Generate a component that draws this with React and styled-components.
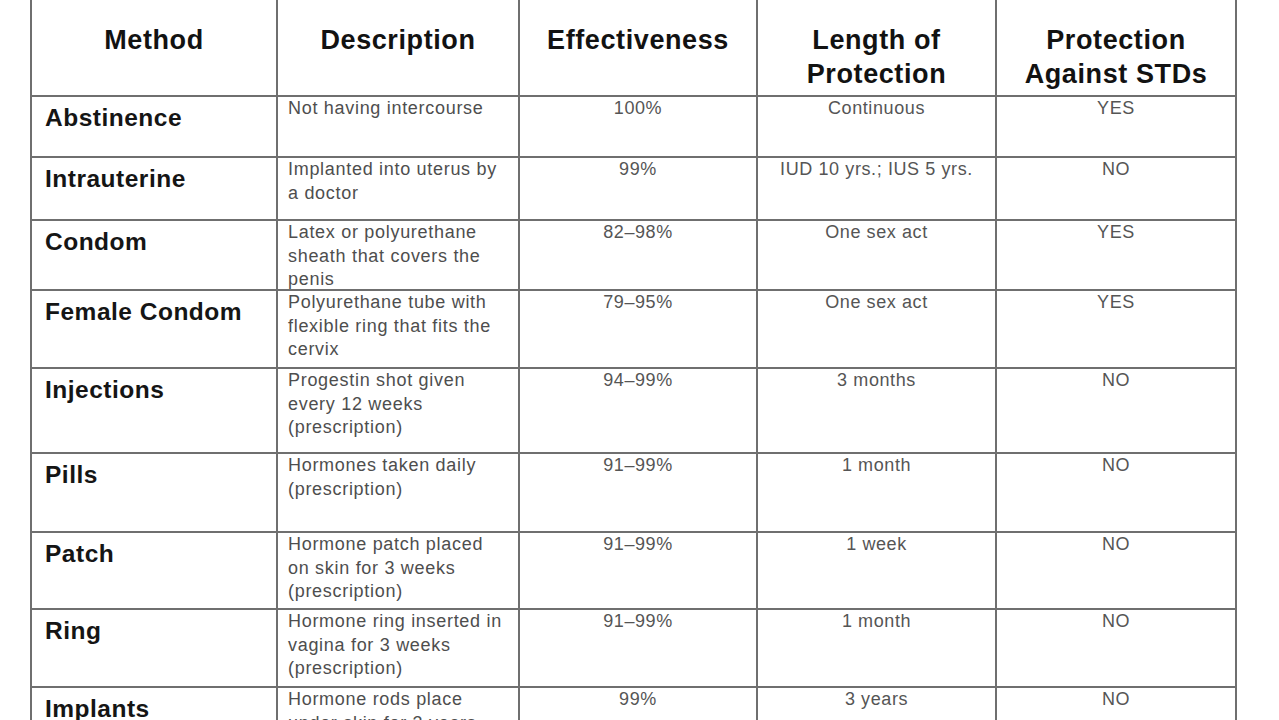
import React from 'react'
import styled, { createGlobalStyle } from 'styled-components'

const GlobalStyle = createGlobalStyle`
  html, body {
    margin: 0;
    padding: 0;
    background: #fff;
    overflow: hidden;
  }
  body {
    font-family: 'Liberation Sans', Arial, sans-serif;
  }
`

const Page = styled.div`
  width: 1279px;
  height: 720px;
  padding-left: 30px;
  box-sizing: border-box;
  overflow: hidden;
`

const Table = styled.table`
  margin-top: -10px;
  border-collapse: collapse;
  table-layout: fixed;
  width: 1207px;
`

const Col = styled.col`
  width: ${p => p.$w}px;
`

const Row = styled.tr`
  height: ${p => p.$h}px;
`

const HeadCell = styled.th`
  border: 2px solid #6f6f6f;
  vertical-align: top;
  padding: 31px 0 0;
  font-size: 27px;
  line-height: 34px;
  letter-spacing: 0.6px;
  font-weight: 700;
  color: #121212;
  text-align: center;
  white-space: nowrap;
`

const MethodCell = styled.td`
  border: 2px solid #6f6f6f;
  vertical-align: top;
  padding: 8px 4px 0 13px;
  font-size: 24.5px;
  line-height: 26px;
  letter-spacing: 0.5px;
  font-weight: 700;
  color: #151515;
  white-space: nowrap;
`

const DescCell = styled.td`
  border: 2px solid #6f6f6f;
  vertical-align: top;
  padding: 0 4px 0 10px;
  font-size: 18px;
  line-height: 23.5px;
  letter-spacing: 0.7px;
  color: #4e4e4e;
`

const Line = styled.span`
  display: block;
  height: 23.5px;
  white-space: nowrap;

  &:last-child {
    height: 12px;
  }
`

const ValueCell = styled.td`
  border: 2px solid #6f6f6f;
  vertical-align: top;
  padding: 0 4px;
  font-size: 18px;
  line-height: 23.5px;
  letter-spacing: 0.6px;
  color: #555;
  text-align: center;
  white-space: nowrap;
`

const columns = [246, 242, 238, 239, 240]

const rows = [
  { h: 61, method: 'Abstinence', desc: ['Not having intercourse'], eff: '100%', len: 'Continuous', std: 'YES' },
  { h: 63, method: 'Intrauterine', desc: ['Implanted into uterus by', 'a doctor'], eff: '99%', len: 'IUD 10 yrs.; IUS 5 yrs.', std: 'NO' },
  { h: 70, method: 'Condom', desc: ['Latex or polyurethane', 'sheath that covers the', 'penis'], eff: '82–98%', len: 'One sex act', std: 'YES' },
  { h: 78, method: 'Female Condom', desc: ['Polyurethane tube with', 'flexible ring that fits the', 'cervix'], eff: '79–95%', len: 'One sex act', std: 'YES' },
  { h: 85, method: 'Injections', desc: ['Progestin shot given', 'every 12 weeks', '(prescription)'], eff: '94–99%', len: '3 months', std: 'NO' },
  { h: 79, method: 'Pills', desc: ['Hormones taken daily', '(prescription)'], eff: '91–99%', len: '1 month', std: 'NO' },
  { h: 77, method: 'Patch', desc: ['Hormone patch placed', 'on skin for 3 weeks', '(prescription)'], eff: '91–99%', len: '1 week', std: 'NO' },
  { h: 78, method: 'Ring', desc: ['Hormone ring inserted in', 'vagina for 3 weeks', '(prescription)'], eff: '91–99%', len: '1 month', std: 'NO' },
  { h: 80, method: 'Implants', desc: ['Hormone rods place', 'under skin for 3 years', '(prescription)'], eff: '99%', len: '3 years', std: 'NO' }
]

export default function App() {
  return (
    <Page>
      <GlobalStyle />
      <Table>
        <colgroup>
          {columns.map((w, i) => (
            <Col key={i} $w={w} />
          ))}
        </colgroup>
        <thead>
          <Row $h={105}>
            <HeadCell>Method</HeadCell>
            <HeadCell>Description</HeadCell>
            <HeadCell>Effectiveness</HeadCell>
            <HeadCell>
              Length of
              <br />
              Protection
            </HeadCell>
            <HeadCell>
              Protection
              <br />
              Against STDs
            </HeadCell>
          </Row>
        </thead>
        <tbody>
          {rows.map(r => (
            <Row key={r.method} $h={r.h}>
              <MethodCell>{r.method}</MethodCell>
              <DescCell>
                {r.desc.map(l => (
                  <Line key={l}>{l}</Line>
                ))}
              </DescCell>
              <ValueCell>{r.eff}</ValueCell>
              <ValueCell>{r.len}</ValueCell>
              <ValueCell>{r.std}</ValueCell>
            </Row>
          ))}
        </tbody>
      </Table>
    </Page>
  )
}
